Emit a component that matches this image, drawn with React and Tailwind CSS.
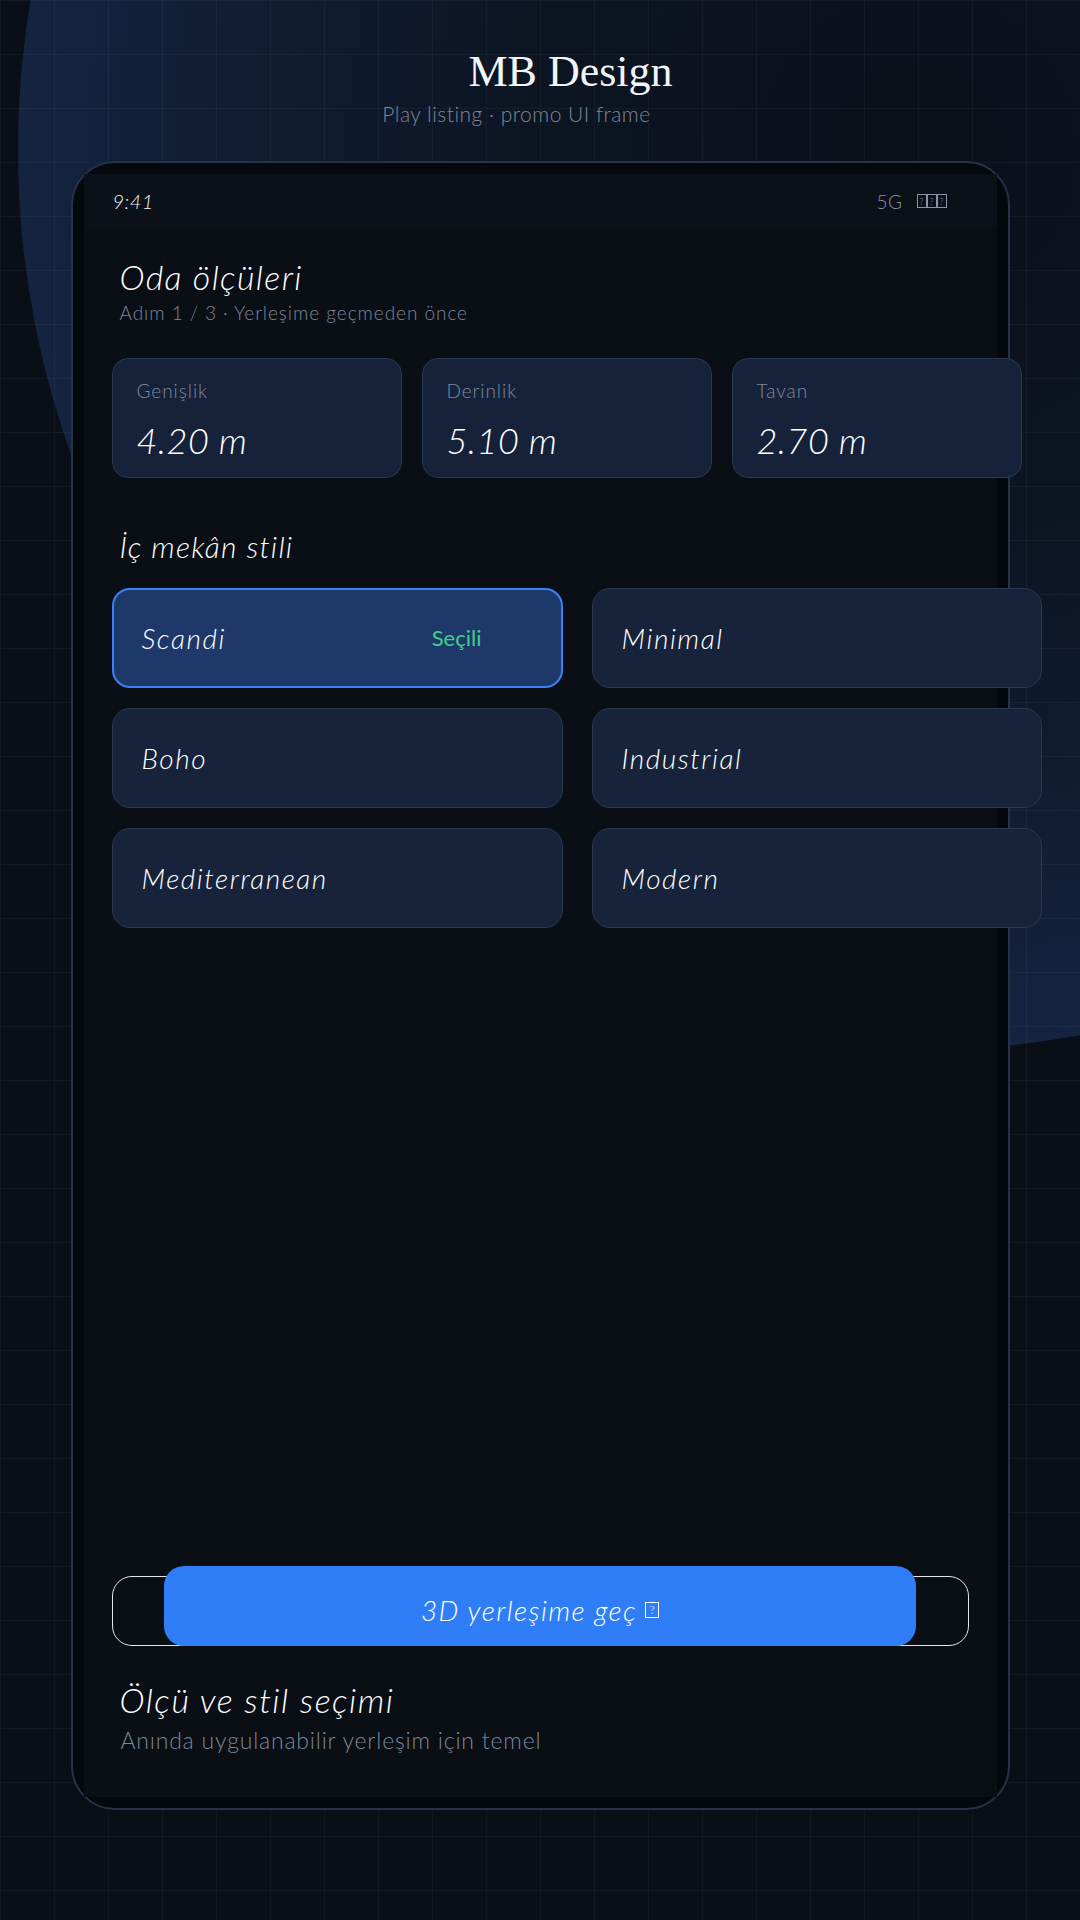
import React from 'react';

const dims = [
  { label: 'Genişlik', value: '4.20 m' },
  { label: 'Derinlik', value: '5.10 m' },
  { label: 'Tavan', value: '2.70 m' },
];

const styles = ['Scandi', 'Minimal', 'Boho', 'Industrial', 'Mediterranean', 'Modern'];

// box drawn for a glyph the font can't show
const Tofu = ({ className = '' }) => (
  <span
    className={`inline-flex items-center justify-center border border-current not-italic leading-none tracking-normal ${className}`}
  >
    ?
  </span>
);

const StyleCard = ({ name, selected }) => {
  if (selected) {
    return (
      <div className="flex h-[100px] items-center justify-between rounded-[18px] border-2 border-[#3b82f6] bg-[#1e3869] pl-[28px] pr-[79px]">
        <span className="text-[28px] italic leading-none tracking-[0.055em] text-white">{name}</span>
        <span className="text-[22px] font-normal leading-none tracking-normal text-[#3ecf8e]">Seçili</span>
      </div>
    );
  }
  return (
    <div className="flex h-[100px] items-center rounded-[18px] border border-[#2a3850] bg-[#17233a] pl-[29px]">
      <span className="text-[28px] italic leading-none tracking-[0.055em] text-white">{name}</span>
    </div>
  );
};

const App = () => {
  return (
    <div className="relative h-[1920px] w-[1080px] overflow-hidden bg-[#0a0f17] font-['Lato',sans-serif] font-light tracking-[0.03em]">
      {/* backdrop glow + grid */}
      <div className="absolute left-[18px] top-[-750px] h-[1800px] w-[1800px] rounded-full bg-[radial-gradient(closest-side,rgba(30,58,110,0.03),rgba(30,58,110,0.14)_45%,rgba(30,58,110,0.48))]" />
      <div className="absolute inset-0 bg-[linear-gradient(rgba(255,255,255,0.035)_1px,transparent_1px),linear-gradient(90deg,rgba(255,255,255,0.035)_1px,transparent_1px)] bg-[size:54px_54px]" />

      <div className="relative flex flex-col items-center pt-[50px]">
        <h1 className="ml-[61px] font-['Liberation_Serif',serif] text-[44px] font-normal leading-none tracking-normal text-[#f1f5f9]">
          MB Design
        </h1>
        <p className="mr-[47px] mt-[9px] text-[21px] leading-none text-[#7d8799]">Play listing · promo UI frame</p>

        {/* phone */}
        <div className="mt-[37px] h-[1649px] w-[939px] rounded-[44px] border-2 border-[#283246] bg-[#05080d] p-[11px]">
          <div className="flex h-full flex-col bg-[#0a0e15]">
            <div className="flex h-[54px] shrink-0 items-center justify-between bg-[#0c1119] pl-[29px] pr-[50px]">
              <span className="text-[20px] italic leading-none text-[#eef2f7]">9:41</span>
              <div className="flex items-center gap-[14px] text-[19px] leading-none text-[#8a93a3]">
                <span>5G</span>
                <span className="flex">
                  <Tofu className="h-[14px] w-[10px] text-[9px]" />
                  <Tofu className="h-[14px] w-[10px] text-[9px]" />
                  <Tofu className="h-[14px] w-[10px] text-[9px]" />
                </span>
              </div>
            </div>

            <div className="flex flex-1 flex-col px-[28px]">
              <div className="pl-[8px] pt-[32px]">
                <h2 className="text-[34px] font-light italic leading-none tracking-[0.04em] text-white">
                  Oda ölçüleri
                </h2>
                <p className="mt-[9px] text-[19px] leading-none tracking-[0.05em] text-[#7d8799]">
                  Adım 1 / 3 · Yerleşime geçmeden önce
                </p>
              </div>

              <div className="mt-[36px] grid grid-cols-[290px_290px_290px] gap-[20px]">
                {dims.map((d) => (
                  <div
                    key={d.label}
                    className="h-[120px] rounded-[16px] border border-[#2a3851] bg-[#16223a] px-[24px] pt-[22px]"
                  >
                    <div className="text-[19px] leading-none tracking-[0.05em] text-[#7f899b]">{d.label}</div>
                    <div className="mt-[22px] text-[36px] italic leading-none text-white">{d.value}</div>
                  </div>
                ))}
              </div>

              <h3 className="mt-[53px] pl-[8px] text-[30px] font-light italic leading-none tracking-[0.04em] text-white">
                İç mekân stili
              </h3>

              <div className="mt-[27px] grid grid-cols-[451px_450px] gap-x-[29px] gap-y-[20px]">
                {styles.map((s, i) => (
                  <StyleCard key={s} name={s} selected={i === 0} />
                ))}
              </div>

              <div className="mt-auto pb-[45px]">
                <div className="flex h-[70px] items-end justify-center rounded-[20px] border border-[#e5e7eb]">
                  <button className="-mb-px flex h-[80px] w-[752px] shrink-0 items-center justify-center gap-[8px] rounded-[20px] bg-[#2f7ef8] pt-[8px] text-[28px] font-light italic leading-none tracking-[0.05em] text-white">
                    <span>3D yerleşime geç</span>
                    <Tofu className="h-[16px] w-[14px] text-[12px]" />
                  </button>
                </div>
                <h2 className="mt-[37px] pl-[8px] text-[34px] font-light italic leading-none tracking-[0.045em] text-white">
                  Ölçü ve stil seçimi
                </h2>
                <p className="mt-[12px] pl-[9px] text-[23px] leading-none tracking-[0.035em] text-[#7d8799]">
                  Anında uygulanabilir yerleşim için temel
                </p>
              </div>
            </div>
          </div>
        </div>
      </div>
    </div>
  );
};

export default App;
